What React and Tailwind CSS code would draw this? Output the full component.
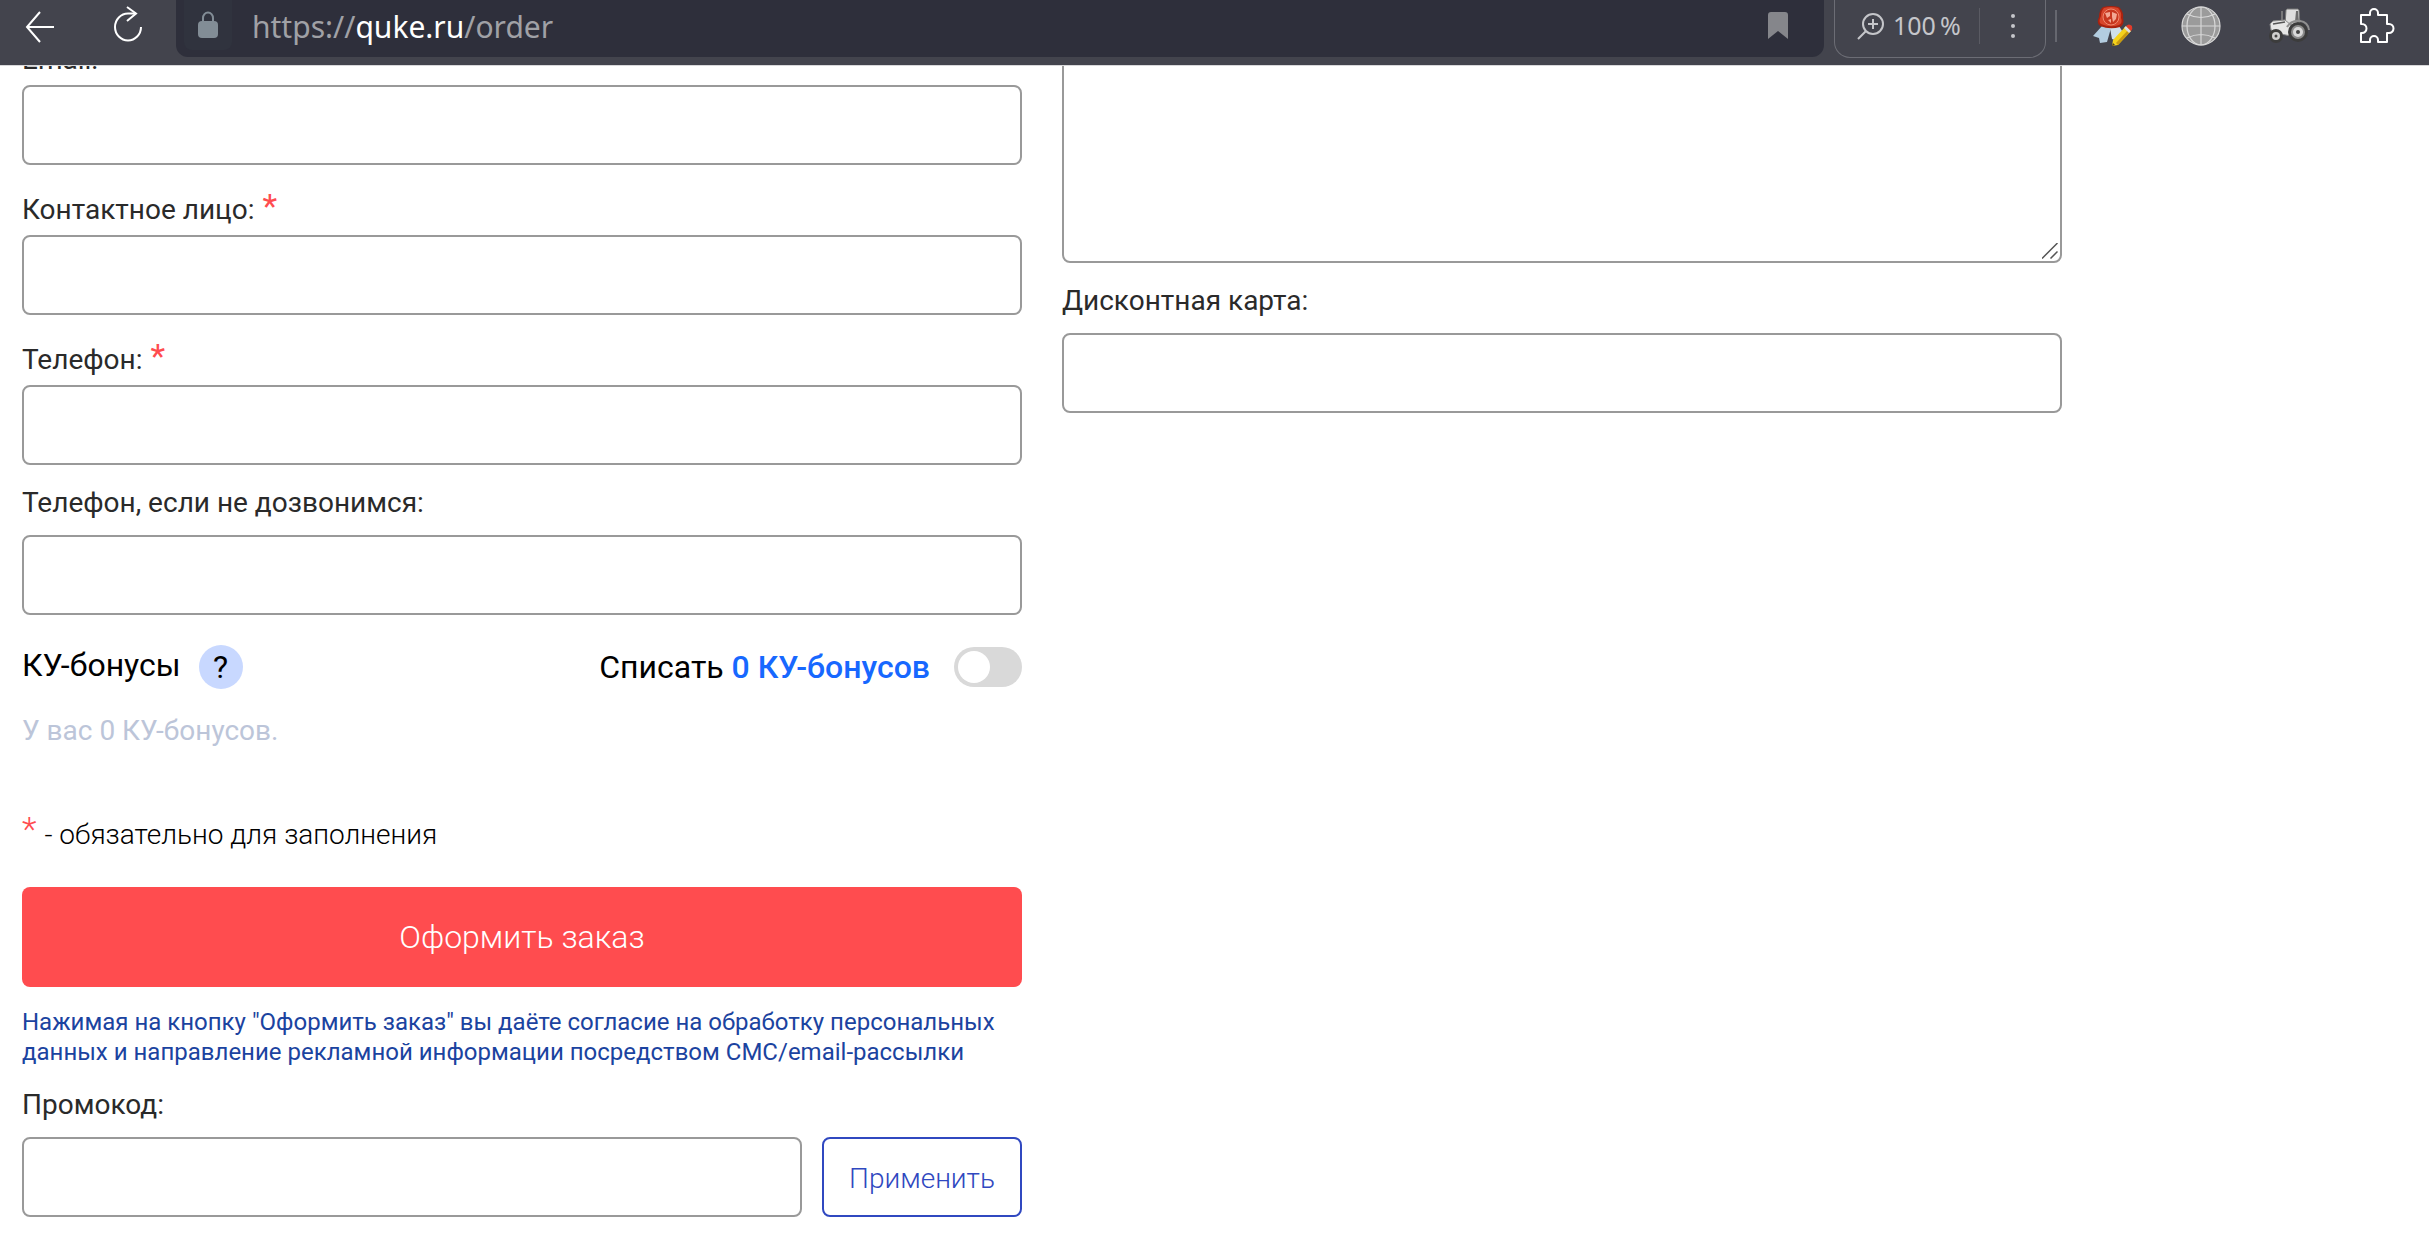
import React from 'react';

const ICON_BUTTON = 'flex items-center justify-center shrink-0';
const INPUT = 'block w-full h-20 px-5 border-2 border-[#999999] rounded-lg bg-white text-[28px] outline-none';

const BackIcon = () => (
  <svg width="30" height="34" viewBox="0 0 30 34" fill="none" stroke="#ffffff" strokeWidth="2">
    <path d="M15 2 L2 17 L15 32 M2 17 H29" />
  </svg>
);

const ReloadIcon = () => (
  <svg width="30" height="36" viewBox="0 0 30 36" fill="none" stroke="#ffffff" strokeWidth="2">
    <path d="M28 21 A13 13.5 0 1 1 15 7.5 H23" />
    <path d="M14 1 L23 7.5 L14 15" />
  </svg>
);

const LockIcon = () => (
  <svg width="20" height="28" viewBox="0 0 20 28">
    <path d="M5 13 V7 a5 5.500 0 0 1 10 0 V13" fill="none" stroke="#828d96" strokeWidth="2" />
    <rect x="0" y="10" width="20" height="17" rx="4" fill="#828d96" />
  </svg>
);

const BookmarkIcon = () => (
  <svg width="20" height="28" viewBox="0 0 20 28" fill="#85868b">
    <path d="M0 4 a3 3 0 0 1 3 -3 H17 a3 3 0 0 1 3 3 V28 L10 20 L0 28 Z" />
  </svg>
);

const MagnifierIcon = () => (
  <svg width="28" height="28" viewBox="0 0 28 28" fill="none" stroke="#c5c6ca" strokeWidth="2">
    <circle cx="16" cy="12" r="10" />
    <path d="M9 19 L1 27 M16 7 V17 M11 12 H21" />
  </svg>
);

const DotsIcon = () => (
  <svg width="6" height="26" viewBox="0 0 6 26" fill="#c5c6ca">
    <circle cx="3" cy="3" r="2" />
    <circle cx="3" cy="13" r="2" />
    <circle cx="3" cy="23" r="2" />
  </svg>
);

const SealIcon = () => (
  <svg width="40" height="40" viewBox="0 0 40 40">
    <path d="M9 20 L0 30 L6 32 L7 37 L14 36 L18 22 Z" fill="#b3cde0" />
    <path d="M17 22 L19 33 L24 35 L31 28 L26 20 Z" fill="#cfe0ec" />
    <path d="M10 1 Q18 -1 26 1 Q31 6 30 12 Q32 18 27 21 Q17 24 7 20 Q3 17 6 11 Q6 4 10 1 Z" fill="#a8220f" />
    <path d="M11 2 Q18 0 25 2 Q29 6 28 12 Q30 17 26 19 Q17 22 8 18 Q5 16 8 10 Q8 5 11 2 Z" fill="#d8452b" />
    <circle cx="18" cy="11" r="8" fill="#c8371f" stroke="#f08a70" />
    <path d="M12 7 L17 6 L17 10 L14 12 Z M19 6 L24 8 L23 13 L20 16 L19 11 Z M15 14 L18 13 L18 17 Z" fill="#f3a793" />
    <path d="M20 34 L33 20 L38 25 L25 39 L19 40 Z" fill="#f4d21c" />
    <path d="M23 37 L36 23 L38 25 L25 39 Z" fill="#c99a10" />
    <path d="M31 22 L33 20 L38 25 L36 27 Z" fill="#dddddd" />
    <path d="M33 20 Q36 17 39 20 Q40 23 38 25 Z" fill="#e23b2a" />
    <path d="M20 37 L19 40 L22 39 Z" fill="#4a3c20" />
  </svg>
);

const GlobeIcon = () => (
  <svg width="40" height="40" viewBox="0 0 40 40">
    <circle cx="20" cy="20" r="19" fill="#9b9b9b" />
    <g fill="none" stroke="#d8d8d8" strokeWidth="1.200">
      <circle cx="20" cy="20" r="19" />
      <ellipse cx="20" cy="20" rx="14" ry="19" />
      <path d="M20 1 V39 M1 20 H39 M6 8 Q20 15 34 8 M6 32 Q20 25 34 32" />
    </g>
  </svg>
);

const TractorIcon = () => (
  <svg width="42" height="36" viewBox="0 0 42 36">
    <path d="M13 3 V12" stroke="#888888" strokeWidth="1.500" />
    <path d="M17 2 L18 1 H29 L30 2 L31 17 H16 Z" fill="#dedede" stroke="#777777" />
    <path d="M27 3 H29 L30 14 H26 Z" fill="#6d6d6d" />
    <path d="M1 16 L4 13 L16 12 L22 17 L22 28 L12 26 L2 22 Z" fill="#e6e6e6" stroke="#8a8a8a" />
    <path d="M4 16 L16 14" stroke="#555555" strokeWidth="1.500" />
    <path d="M18 19 Q22 12 31 13 Q39 14 40 22" fill="none" stroke="#8f8f8f" strokeWidth="2" />
    <circle cx="29" cy="24" r="10" fill="#3c3c3c" />
    <circle cx="29" cy="24" r="7" fill="#8b8b8b" />
    <circle cx="29" cy="24" r="5" fill="#d9d9d9" />
    <circle cx="29" cy="24" r="2" fill="#444444" />
    <circle cx="7" cy="28" r="7" fill="#3c3c3c" />
    <circle cx="7" cy="28" r="4" fill="#cfcfcf" />
    <circle cx="7" cy="28" r="1.500" fill="#444444" />
  </svg>
);

const PuzzleIcon = () => (
  <svg width="36" height="36" viewBox="0 0 36 36" fill="none" stroke="#ffffff" strokeWidth="2" strokeLinejoin="round">
    <path d="M2 7 H11 V5 a4 4 0 0 1 8 0 V7 H28 V16 h2 a4 4 0 0 1 0 9 h-2 V34 H19 V32 a4 4 0 0 0 -8 0 V34 H2 V25 h1 a4 4 0 0 0 0 -9 H2 Z" />
  </svg>
);

const GripIcon = () => (
  <svg width="16" height="16" viewBox="0 0 16 16" fill="none" stroke="#555555" strokeWidth="1.500">
    <path d="M0 15.500 L15.500 0 M8.500 15.500 L15.500 8.500" />
  </svg>
);

const BrowserBar = () => (
  <header className="relative z-10 flex h-[66px] bg-[#43444d] border-b border-[#d8d8da] font-['Noto_Sans',sans-serif]">
    <button aria-label="Назад" className={`${ICON_BUTTON} w-20 h-[54px]`}>
      <BackIcon />
    </button>
    <button aria-label="Обновить" className={`${ICON_BUTTON} w-24 h-12`}>
      <ReloadIcon />
    </button>

    {/* Address bar */}
    <div className="flex flex-1 h-[57px] items-start rounded-b-xl bg-[#2e2f3b]">
      <button aria-label="Безопасное соединение" className={`${ICON_BUTTON} ml-2 w-12 h-[50px] rounded-b-lg bg-[#30333e]`}>
        <LockIcon />
      </button>
      <a href="#order" className="ml-5 flex-1 h-[54px] leading-[54px] text-[30px] text-[#a0a1a6]">
        https://<span className="text-white">quke.ru</span>/order
      </a>
      <button aria-label="Добавить в закладки" className={`${ICON_BUTTON} mr-9 w-5 h-[50px]`}>
        <BookmarkIcon />
      </button>
    </div>

    {/* Zoom controls */}
    <div className="ml-2.5 flex h-[58px] w-[212px] items-start rounded-b-2xl border border-t-0 border-[#6c6d75]">
      <button className="flex h-[52px] flex-1 items-center gap-2 pl-[22px] text-[25px] text-[#c5c6ca]">
        <MagnifierIcon />
        <span>100&#8201;%</span>
      </button>
      <button aria-label="Меню" className={`${ICON_BUTTON} mt-2 w-[66px] h-9 border-l border-[#5a5b63]`}>
        <DotsIcon />
      </button>
    </div>

    {/* Extensions */}
    <div className="ml-[9px] mr-[34px] flex h-[52px] items-center">
      <span className="mr-9 h-8 w-0.5 bg-[#66676f]" />
      <div className="flex items-center gap-12">
        <button aria-label="Подпись"><SealIcon /></button>
        <button aria-label="Сеть"><GlobeIcon /></button>
        <button aria-label="Трактор"><TractorIcon /></button>
        <button aria-label="Расширения"><PuzzleIcon /></button>
      </div>
    </div>
  </header>
);

const Star = () => <span className="-mt-1 text-[34px] leading-8 text-[#ff4c4f]">*</span>;

const Label = ({ id, required, children }) => (
  <label
    htmlFor={id}
    className={`flex h-[70px] items-start gap-2 text-[28px] leading-8 text-[#2a2a2a] ${required ? 'pt-[29px]' : 'pt-[22px]'}`}
  >
    {children}
    {required && <Star />}
  </label>
);

const Field = ({ id, label, required, type = 'text' }) => (
  <div>
    <Label id={id} required={required}>{label}</Label>
    <input id={id} type={type} className={INPUT} />
  </div>
);

const Bonuses = () => (
  <section>
    <div className="mt-[30px] flex h-11 items-center justify-between text-[32px] text-black">
      <div className="flex items-center gap-[18px]">
        <h2 className="pb-1">КУ-бонусы</h2>
        <button aria-label="Что такое КУ-бонусы" className="h-11 w-11 rounded-full bg-[#c8d8ff] leading-[44px]">
          ?
        </button>
      </div>
      <label className="flex items-center gap-6">
        <span>
          Списать <span className="font-medium text-[#1768ff]">0 КУ-бонусов</span>
        </span>
        <input
          type="checkbox"
          className="h-10 w-[68px] appearance-none rounded-full bg-[#d9d9d9] p-1 before:block before:h-8 before:w-8 before:rounded-full before:bg-white checked:bg-[#1768ff] checked:before:ml-auto"
        />
      </label>
    </div>
    <p className="mt-[26px] text-[28px] leading-8 text-[#bcc5d9]">У вас 0 КУ-бонусов.</p>
  </section>
);

const App = () => (
  <div className="min-h-screen bg-white font-[Roboto,sans-serif]">
    <BrowserBar />

    <main className="-mt-[51px] ml-[22px] grid max-w-[2040px] grid-cols-2 gap-10">
      <form onSubmit={(e) => e.preventDefault()}>
        <Field id="email" label="Email:" type="email" required />
        <Field id="contact" label="Контактное лицо:" required />
        <Field id="phone" label="Телефон:" type="tel" required />
        <Field id="phone2" label="Телефон, если не дозвонимся:" type="tel" />

        <Bonuses />

        <p className="mt-[70px] flex gap-2 text-[28px] font-light leading-9 text-black">
          <Star />
          - обязательно для заполнения
        </p>

        <button type="submit" className="mt-[34px] h-[100px] w-full rounded-lg bg-[#ff4c4f] text-[32px] font-light text-white">
          Оформить заказ
        </button>

        <p className="mt-5 text-[24px] leading-[30px] text-[#1b43a0]">
          Нажимая на кнопку "Оформить заказ" вы даёте согласие на обработку персональных данных и направление рекламной
          информации посредством СМС/email-рассылки
        </p>

        <Label id="promo">Промокод:</Label>
        <div className="flex gap-5">
          <input id="promo" type="text" className={`${INPUT} flex-1`} />
          <button type="button" className="h-20 w-[200px] shrink-0 rounded-lg border-2 border-[#3048c0] pt-1 text-[28px] font-light text-[#3048c0]">
            Применить
          </button>
        </div>
      </form>

      <div>
        <div className="relative">
          <textarea
            aria-label="Комментарий"
            className="block h-[248px] w-full resize-none rounded-lg border-2 border-[#999999] p-5 text-[28px] outline-none"
          />
          <span className="pointer-events-none absolute bottom-1 right-1">
            <GripIcon />
          </span>
        </div>
        <Field id="discount" label="Дисконтная карта:" />
      </div>
    </main>
  </div>
);

export default App;
